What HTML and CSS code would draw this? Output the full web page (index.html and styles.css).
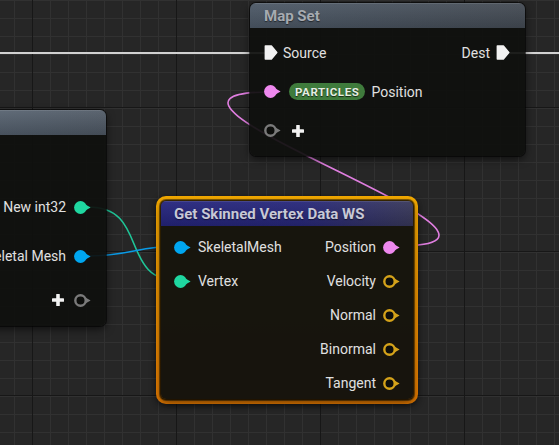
FILE: index.html
```html
<!DOCTYPE html>
<html lang="en">
<head>
<meta charset="utf-8">
<title>Niagara Graph</title>
<link rel="stylesheet" href="styles.css">
</head>
<body>
<svg class="defs" width="0" height="0" aria-hidden="true">
  <defs>
    <symbol id="pin-filled" viewBox="0 0 17 13">
      <circle cx="6.5" cy="6.5" r="6.4" fill="currentColor"/>
      <path d="M11.8 3.7 L16.6 6.5 L11.8 9.3 Z" fill="currentColor"/>
    </symbol>
    <symbol id="pin-ring" viewBox="0 0 17 13">
      <circle cx="6.5" cy="6.5" r="5.2" fill="#0d0e0c" stroke="currentColor" stroke-width="2.4"/>
      <path d="M11.8 3.7 L16.6 6.5 L11.8 9.3 Z" fill="currentColor"/>
    </symbol>
    <symbol id="pin-exec" viewBox="0 0 14 15">
      <path d="M1.3 1 H7.4 L12.8 7.5 L7.4 14 H1.3 Z" fill="currentColor" stroke="currentColor" stroke-width="1.4" stroke-linejoin="round"/>
    </symbol>
    <symbol id="plus" viewBox="0 0 12 12">
      <rect x="4.2" y="0" width="3.6" height="12" rx="0.6" fill="currentColor"/>
      <rect x="0" y="4.2" width="12" height="3.6" rx="0.6" fill="currentColor"/>
    </symbol>
  </defs>
</svg>

<div class="graph">
  <svg class="wires" width="559" height="445" viewBox="0 0 559 445">
    <path class="wire wire-exec" d="M0 53 H266"/>
    <path class="wire wire-exec" d="M508 53 H559"/>
    <path class="wire wire-vec" d="M397 246 C582 246 85 92 270 92"/>
    <path class="wire wire-int" d="M88 207 C150 207 118 281 180 281"/>
    <path class="wire wire-mesh" d="M88 256 C132 256 136 246 180 246"/>
  </svg>

  <!-- Map Set -->
  <div class="node node-mapset">
    <div class="node-header header-slate">Map Set</div>
    <div class="node-body mapset-body">
      <div class="row row-split">
        <div class="pin-group">
          <svg class="pin-exec"><use href="#pin-exec"/></svg>
          <span class="label">Source</span>
        </div>
        <div class="pin-group">
          <span class="label">Dest</span>
          <svg class="pin-exec"><use href="#pin-exec"/></svg>
        </div>
      </div>
      <div class="row">
        <svg class="pin pin-vec"><use href="#pin-filled"/></svg>
        <span class="namespace">PARTICLES</span>
        <span class="label">Position</span>
      </div>
      <div class="row">
        <svg class="pin pin-add"><use href="#pin-ring"/></svg>
        <svg class="plus"><use href="#plus"/></svg>
      </div>
    </div>
  </div>

  <!-- Partially visible parameter node -->
  <div class="node node-params">
    <div class="node-header header-slate-light"></div>
    <div class="node-body params-body">
      <div class="row row-int">
        <span class="label">New int32</span>
        <svg class="pin pin-int"><use href="#pin-filled"/></svg>
      </div>
      <div class="row row-mesh">
        <span class="label">Skeletal Mesh</span>
        <svg class="pin pin-mesh"><use href="#pin-filled"/></svg>
      </div>
      <div class="row row-add">
        <svg class="plus"><use href="#plus"/></svg>
        <svg class="pin pin-add"><use href="#pin-ring"/></svg>
      </div>
    </div>
  </div>

  <!-- Get Skinned Vertex Data WS (selected) -->
  <div class="selection">
    <div class="node node-skinned">
      <div class="node-header header-blue">Get Skinned Vertex Data WS</div>
      <div class="node-body skinned-body">
        <div class="pin-column">
          <div class="row">
            <svg class="pin pin-mesh"><use href="#pin-filled"/></svg>
            <span class="label">SkeletalMesh</span>
          </div>
          <div class="row">
            <svg class="pin pin-int"><use href="#pin-filled"/></svg>
            <span class="label">Vertex</span>
          </div>
        </div>
        <div class="pin-column outputs">
          <div class="row">
            <span class="label">Position</span>
            <svg class="pin pin-vec"><use href="#pin-filled"/></svg>
          </div>
          <div class="row">
            <span class="label">Velocity</span>
            <svg class="pin pin-vec3"><use href="#pin-ring"/></svg>
          </div>
          <div class="row">
            <span class="label">Normal</span>
            <svg class="pin pin-vec3"><use href="#pin-ring"/></svg>
          </div>
          <div class="row">
            <span class="label">Binormal</span>
            <svg class="pin pin-vec3"><use href="#pin-ring"/></svg>
          </div>
          <div class="row">
            <span class="label">Tangent</span>
            <svg class="pin pin-vec3"><use href="#pin-ring"/></svg>
          </div>
        </div>
      </div>
    </div>
  </div>
</div>
</body>
</html>
```

FILE: styles.css
```css
* {
  box-sizing: border-box;
}

body {
  margin: 0;
  background: #262626;
  font-family: Roboto, "Noto Sans", "Liberation Sans", sans-serif;
}

.defs {
  position: absolute;
  width: 0;
  height: 0;
}

/* Canvas with minor (18px) and major (144px) grid lines */
.graph {
  position: relative;
  width: 559px;
  height: 445px;
  overflow: hidden;
  background-color: #262626;
  background-image:
    linear-gradient(to right, #171717 1px, transparent 1px),
    linear-gradient(to bottom, #171717 1px, transparent 1px),
    linear-gradient(to right, #313131 1px, transparent 1px),
    linear-gradient(to bottom, #313131 1px, transparent 1px);
  background-size: 144px 100%, 100% 144px, 18px 100%, 100% 18px;
  background-position: 32px 0, 0 107px, 14px 0, 0 0;
}

.wires {
  position: absolute;
  left: 0;
  top: 0;
}

.wire {
  fill: none;
  stroke-linecap: round;
}

.wire-exec {
  stroke: #d2d2d2;
  stroke-width: 2;
}

.wire-vec {
  stroke: #e07ee0;
  stroke-width: 1.6;
}

.wire-int {
  stroke: #1fc497;
  stroke-width: 1.6;
}

.wire-mesh {
  stroke: #0a9ae6;
  stroke-width: 1.6;
}

/* Nodes */
.node {
  display: flex;
  flex-direction: column;
  border-radius: 6px;
  background: rgba(15, 16, 14, 0.93);
  box-shadow: 0 0 0 1px rgba(0, 0, 0, 0.55), 0 3px 8px rgba(0, 0, 0, 0.6);
  overflow: hidden;
}

.node-header {
  height: 25px;
  flex: none;
  display: flex;
  align-items: center;
  padding: 0 14px;
  font-size: 15px;
  font-weight: 700;
  white-space: nowrap;
  text-shadow: 0 1px 1px rgba(0, 0, 0, 0.5);
  box-shadow: inset 0 1px 0 rgba(255, 255, 255, 0.1);
}

.header-slate {
  color: #a6aab0;
  background:
    linear-gradient(to bottom, rgba(255, 255, 255, 0.06), rgba(0, 0, 0, 0.12)),
    linear-gradient(to right, #4c5866, #434a53);
}

.header-slate-light {
  background:
    linear-gradient(to bottom, rgba(255, 255, 255, 0.08), rgba(0, 0, 0, 0.14)),
    linear-gradient(to right, #5a6878, #4e5864);
}

.header-blue {
  color: #c7c8d6;
  padding-left: 13px;
  background:
    linear-gradient(to bottom, rgba(255, 255, 255, 0.05), rgba(0, 0, 0, 0.15)),
    linear-gradient(to right, #25257e 0%, #27277a 55%, #38385a 100%);
}

.node-body {
  flex: 1;
}

.row {
  display: flex;
  align-items: center;
}

.label {
  font-size: 14px;
  color: #e0e0e0;
  white-space: nowrap;
}

.pin {
  width: 17px;
  height: 13px;
  flex: none;
}

.pin-exec {
  width: 14px;
  height: 15px;
  flex: none;
  color: #f2f2f2;
}

.plus {
  width: 12px;
  height: 12px;
  flex: none;
  color: #f2f2f2;
}

.pin-vec { color: #ee88ee; }
.pin-int { color: #1fd7a0; }
.pin-mesh { color: #00a6f0; }
.pin-add { color: #7a7a7a; }
.pin-vec3 { color: #d4a21a; }

/* Map Set */
.node-mapset {
  position: absolute;
  left: 250px;
  top: 3px;
  width: 275px;
  height: 153px;
}

.mapset-body {
  display: flex;
  flex-direction: column;
  padding: 5px 15px 6px 14px;
}

.mapset-body .row {
  height: 39px;
}

.row-split {
  justify-content: space-between;
}

.pin-group {
  display: flex;
  align-items: center;
  gap: 6px;
}

.mapset-body .pin-group:first-child {
  gap: 5px;
}

.mapset-body .pin {
  margin-right: 8px;
}

.mapset-body .plus {
  margin-left: 3px;
}

.namespace {
  height: 17px;
  padding: 0 6px 0 6px;
  margin-right: 6px;
  display: flex;
  align-items: center;
  border-radius: 9px;
  background: #3f7b3c;
  color: #e6eee2;
  font-size: 11.5px;
  font-weight: 700;
  letter-spacing: 0.6px;
  text-shadow: 0 1px 1px rgba(0, 0, 0, 0.7);
}

/* Partially visible parameter node on the left */
.node-params {
  position: absolute;
  left: -150px;
  top: 110px;
  width: 256px;
  height: 216px;
}

.params-body {
  display: flex;
  flex-direction: column;
  align-items: flex-end;
  padding: 60px 15px 13px 0;
}

.params-body .row {
  height: 24px;
  gap: 8px;
}

.params-body .row-mesh {
  margin-top: 25px;
}

.params-body .row-add {
  margin-top: 20px;
}

.params-body .plus {
  margin-right: 2px;
}

/* Selected node: orange outline with a dim halo */
.selection {
  position: absolute;
  left: 156px;
  top: 196px;
  width: 262px;
  height: 208px;
  padding: 2px;
  border: 3px solid transparent;
  border-radius: 10px;
  background:
    linear-gradient(rgba(60, 42, 6, 0.6), rgba(60, 42, 6, 0.6)) padding-box,
    linear-gradient(to bottom, #f4aa00, #e27800) border-box;
  box-shadow: 0 2px 6px rgba(0, 0, 0, 0.5);
}

.node-skinned {
  width: 100%;
  height: 100%;
  border-radius: 5px;
}

.skinned-body {
  display: flex;
  justify-content: space-between;
  padding: 4px 13px 0 13px;
}

.pin-column {
  display: flex;
  flex-direction: column;
}

.pin-column .row {
  height: 34px;
  gap: 7px;
}

.outputs {
  align-items: flex-end;
}
```
